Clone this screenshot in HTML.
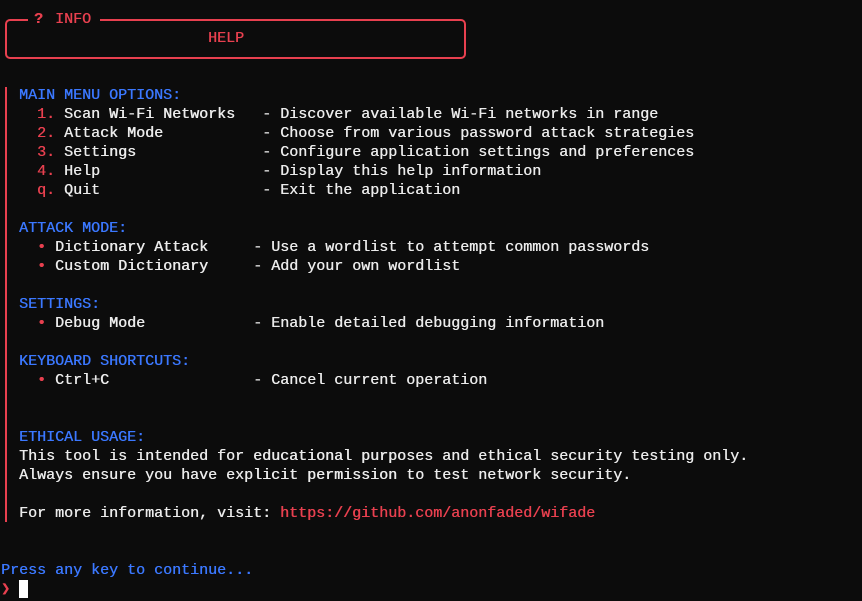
<!DOCTYPE html>
<html><head><meta charset="utf-8"><style>
html,body{margin:0;padding:0;background:#0c0c0c;width:862px;height:601px;overflow:hidden}
body{position:relative;font-family:"Liberation Mono","DejaVu Sans Mono",monospace;font-size:15px;color:#ebebeb}
.l{position:absolute;left:19px;height:19px;line-height:19px;white-space:pre;text-shadow:0.4px 0 0 currentColor}
.b{color:#3b78ff}.r{color:#e8404f}
.box{position:absolute;left:5px;top:19px;width:457px;height:36px;border:2px solid #e8404f;border-radius:5px}
.bar{position:absolute;left:5px;top:87px;width:2px;height:435px;background:#e8404f}
</style></head><body>
<div class="box"></div>
<div style="position:absolute;left:28px;top:14px;width:72px;height:10px;background:#0c0c0c"></div>
<div class="l r" style="left:34px;top:10px"><b>?</b></div>
<div class="l r" style="left:55px;top:10px">INFO</div>
<div class="l r" style="left:208px;top:29px">HELP</div>
<div class="bar"></div>
<div class="l b" style="top:86px">MAIN MENU OPTIONS:</div>
<div class="l" style="top:105px">  <span class="r">1.</span> Scan Wi-Fi Networks   - Discover available Wi-Fi networks in range</div>
<div class="l" style="top:124px">  <span class="r">2.</span> Attack Mode           - Choose from various password attack strategies</div>
<div class="l" style="top:143px">  <span class="r">3.</span> Settings              - Configure application settings and preferences</div>
<div class="l" style="top:162px">  <span class="r">4.</span> Help                  - Display this help information</div>
<div class="l" style="top:181px">  <span class="r">q.</span> Quit                  - Exit the application</div>
<div class="l b" style="top:219px">ATTACK MODE:</div>
<div class="l" style="top:238px">  <span class="r">•</span> Dictionary Attack     - Use a wordlist to attempt common passwords</div>
<div class="l" style="top:257px">  <span class="r">•</span> Custom Dictionary     - Add your own wordlist</div>
<div class="l b" style="top:295px">SETTINGS:</div>
<div class="l" style="top:314px">  <span class="r">•</span> Debug Mode            - Enable detailed debugging information</div>
<div class="l b" style="top:352px">KEYBOARD SHORTCUTS:</div>
<div class="l" style="top:371px">  <span class="r">•</span> Ctrl+C                - Cancel current operation</div>
<div class="l b" style="top:428px">ETHICAL USAGE:</div>
<div class="l" style="top:447px">This tool is intended for educational purposes and ethical security testing only.</div>
<div class="l" style="top:466px">Always ensure you have explicit permission to test network security.</div>
<div class="l" style="top:504px">For more information, visit: <span class="r">https://github.com/anonfaded/wifade</span></div>
<div class="l b" style="left:1px;top:561px">Press any key to continue...</div>
<div class="l r" style="left:1px;top:580px">❯</div>
<div style="position:absolute;left:19px;top:580px;width:9px;height:18px;background:#fff"></div>
</body></html>
